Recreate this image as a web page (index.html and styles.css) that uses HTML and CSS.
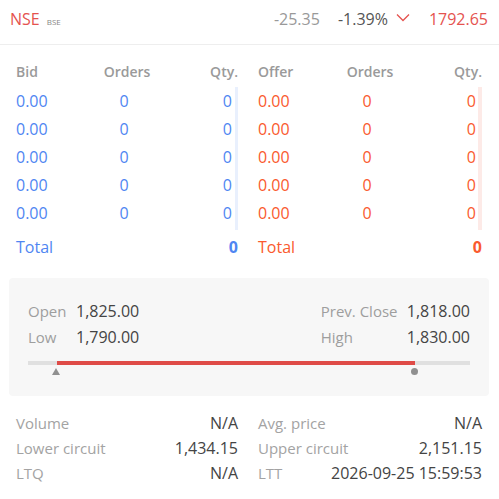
FILE: index.html
```html
<!DOCTYPE html>
<html>
<head>
<meta charset="utf-8">
<link rel="stylesheet" href="styles.css">
</head>
<body>
<div class="page">
  <header class="top">
    <div class="exch"><span class="nse">NSE</span><span class="bse">BSE</span></div>
    <div class="quote">
      <span class="chg">-25.35</span>
      <span class="pct">-1.39%</span>
      <svg class="chev" width="14" height="9" viewBox="0 0 14 9"><path d="M1 1.5 L7 7.5 L13 1.5" fill="none" stroke="#e5534f" stroke-width="1.3"/></svg>
      <span class="ltp">1792.65</span>
    </div>
  </header>

  <section class="depth">
    <div class="side bid">
      <div class="hrow"><span>Bid</span><span class="c">Orders</span><span class="r">Qty.</span></div>
      <div class="body">
        <div class="row"><span>0.00</span><span class="c">0</span><span class="r">0</span></div>
        <div class="row"><span>0.00</span><span class="c">0</span><span class="r">0</span></div>
        <div class="row"><span>0.00</span><span class="c">0</span><span class="r">0</span></div>
        <div class="row"><span>0.00</span><span class="c">0</span><span class="r">0</span></div>
        <div class="row"><span>0.00</span><span class="c">0</span><span class="r">0</span></div>
      </div>
      <div class="total"><span>Total</span><span class="tv">0</span></div>
    </div>
    <div class="side ask">
      <div class="hrow"><span>Offer</span><span class="c">Orders</span><span class="r">Qty.</span></div>
      <div class="body">
        <div class="row"><span>0.00</span><span class="c">0</span><span class="r">0</span></div>
        <div class="row"><span>0.00</span><span class="c">0</span><span class="r">0</span></div>
        <div class="row"><span>0.00</span><span class="c">0</span><span class="r">0</span></div>
        <div class="row"><span>0.00</span><span class="c">0</span><span class="r">0</span></div>
        <div class="row"><span>0.00</span><span class="c">0</span><span class="r">0</span></div>
      </div>
      <div class="total"><span>Total</span><span class="tv">0</span></div>
    </div>
  </section>

  <section class="ohlc">
    <div class="ohlc-grid">
      <div class="pair"><span class="lbl">Open</span><span class="val">1,825.00</span></div>
      <div class="pair right"><span class="lbl">Prev. Close</span><span class="val">1,818.00</span></div>
      <div class="pair"><span class="lbl">Low</span><span class="val">1,790.00</span></div>
      <div class="pair right"><span class="lbl">High</span><span class="val">1,830.00</span></div>
    </div>
    <div class="range">
      <div class="track"><div class="fill" style="margin-left:29px;width:358px"></div></div>
      <div class="marks">
        <span class="tri" style="left:24px"></span>
        <span class="dot" style="left:383px"></span>
      </div>
    </div>
  </section>

  <section class="stats">
    <div class="stat"><span class="lbl">Volume</span><span class="val">N/A</span></div>
    <div class="stat"><span class="lbl">Avg. price</span><span class="val">N/A</span></div>
    <div class="stat"><span class="lbl">Lower circuit</span><span class="val">1,434.15</span></div>
    <div class="stat"><span class="lbl">Upper circuit</span><span class="val">2,151.15</span></div>
    <div class="stat"><span class="lbl">LTQ</span><span class="val">N/A</span></div>
    <div class="stat"><span class="lbl">LTT</span><span class="val">2026-09-25 15:59:53</span></div>
  </section>
</div>
</body>
</html>
```

FILE: styles.css
```css
* { box-sizing: border-box; }
html, body { margin: 0; padding: 0; background: #fff; }
body {
  font-family: "Open Sans", "Noto Sans", sans-serif;
  color: #444;
  width: 499px;
  height: 499px;
  overflow: hidden;
}
.page { width: 499px; }

.top {
  height: 45px;
  border-bottom: 1px solid #eeeeee;
  display: flex;
  align-items: center;
  justify-content: space-between;
  padding: 0 11px 6px 10px;
}
.exch { display: flex; align-items: baseline; gap: 7px; }
.nse { color: #e5534f; font-size: 16px; }
.bse { color: #888; font-size: 8px; }
.quote { display: flex; align-items: center; font-size: 16px; }
.chg { color: #999; margin-right: 18px; }
.pct { color: #555; }
.chev { margin-left: 8px; margin-right: 19px; margin-top: -3px; }
.ltp { color: #e5534f; }

.depth {
  display: grid;
  grid-template-columns: 222px 224px;
  column-gap: 20px;
  padding: 12px 17px 0 16px;
}
.hrow, .row {
  display: grid;
  grid-template-columns: 1fr 1fr 1fr;
  align-items: center;
}
.hrow {
  height: 30px;
  font-size: 14px;
  font-weight: 600;
  color: #9a9a9a;
  padding-bottom: 2px;
}
.c { text-align: center; }
.r { text-align: right; }
.body {
  padding-bottom: 3px;
  border-right: 3px solid;
}
.row {
  height: 28px;
  font-size: 16px;
  padding-right: 3px;
}
.bid .body { border-right-color: #e9f0fd; }
.ask .body { border-right-color: #fdeae7; border-right-width: 4px; }
.ask .row { padding-right: 2px; }
.bid .row, .bid .total { color: #4f86f2; }
.ask .row, .ask .total { color: #fa5a2e; }
.total {
  height: 34px;
  display: flex;
  justify-content: space-between;
  align-items: center;
  font-size: 16px;
}
.tv { font-weight: 700; font-size: 16px; }

.ohlc {
  margin: 14px 10px 0 9px;
  background: #f7f7f7;
  border-radius: 4px;
  padding: 20px 19px 0 19px;
  height: 118px;
}
.ohlc-grid {
  display: grid;
  grid-template-columns: 1fr 1fr;
}
.pair { display: flex; align-items: center; height: 26px; }
.pair .lbl { color: #9e9e9e; width: 48px; font-size: 15px; }
.pair.right { justify-content: flex-end; }
.pair.right .lbl { width: 86px; }
.pair .val { color: #444; font-size: 16px; }
.range { margin-top: 11px; }
.track { height: 4px; background: #e0e0e0; width: 442px; }
.fill { height: 4px; background: #df4b47; }
.marks { position: relative; height: 12px; }
.tri {
  position: absolute;
  top: 3px;
  width: 0; height: 0;
  border-left: 4px solid transparent;
  border-right: 4px solid transparent;
  border-bottom: 7px solid #909090;
}
.dot {
  position: absolute;
  top: 3px;
  width: 7px; height: 7px;
  border-radius: 50%;
  background: #909090;
}

.stats {
  display: grid;
  grid-template-columns: 222px 224px;
  column-gap: 20px;
  padding: 14px 17px 0 16px;
}
.stat {
  display: flex;
  justify-content: space-between;
  align-items: center;
  height: 25px;
}
.stat .lbl { color: #a3a3a3; font-size: 15px; }
.stat .val { color: #444; font-size: 16px; }
```
